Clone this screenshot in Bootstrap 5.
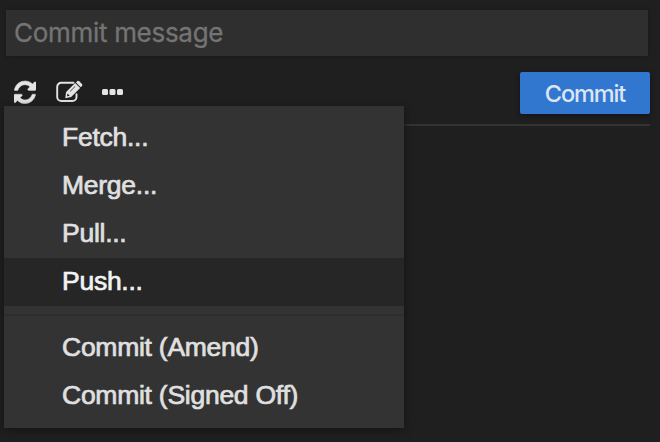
<!DOCTYPE html>
<html lang="en">
<head>
<meta charset="utf-8">
<title>Commit</title>
<link href="https://cdn.jsdelivr.net/npm/bootstrap@5.3.0/dist/css/bootstrap.min.css" rel="stylesheet">
<style>
body{background:#1f1f1f;color:#e0e0e0;height:442px;overflow:hidden;padding:10px 10px 0 6px}
.msg-input,.msg-input:focus{width:642px;height:46px;background:#2f2f2f;color:#ddd;font:26px/46px Inter,sans-serif;letter-spacing:-.3px;padding:0 8px;box-shadow:0 0 3px #191919}
.msg-input::placeholder{color:#747474;opacity:1;-webkit-text-stroke:.3px}
.tools{height:70px;padding-top:16px;border-bottom:2px solid #333}
.tool-btn{line-height:0;color:#e4e4e4}
.tool-group{gap:19px}
.commit-btn{width:130px;height:42px;background:#3277cf;color:#dbe5f3;border-radius:2px;font:500 23.5px/44px Inter,sans-serif;letter-spacing:-1.1px;box-shadow:0 2px 5px #141414}
.git-menu{left:-2px;top:50px;width:400px;height:322px;background:#333;font:26.5px/48px "Liberation Sans",Arial,sans-serif;box-shadow:0 2px 8px #151515}
.git-menu .dropdown-item{height:48px;padding:0 0 0 58px;color:#e0e0e0;line-height:46px;letter-spacing:-.26px;-webkit-text-stroke:.7px}
.git-menu .dropdown-item:hover,.git-menu .dropdown-item.active{background:#262626;color:#f2f2f2}
.git-menu .dropdown-divider{border-top:2px solid #2e2e2e;margin:8px 0;opacity:1}
</style>
<script src="https://cdn.jsdelivr.net/npm/bootstrap@5.3.0/dist/js/bootstrap.bundle.min.js"></script>
</head>
<body>
<input class="msg-input form-control border-0 rounded-0" type="text" placeholder="Commit message" aria-label="Commit message">
<div class="tools position-relative d-flex justify-content-between align-items-start">
  <div class="tool-group d-flex ps-2 pt-2">
    <button class="tool-btn btn border-0 p-0" aria-label="Refresh"><svg width="22" height="24" viewBox="0 -60 1536 1616" preserveAspectRatio="none" fill="currentColor" stroke="currentColor" stroke-width="30"><path d="M1511 928q0 5-1 7-64 268-268 434.500t-478 166.500q-146 0-282.500-55t-243.500-157l-129 129q-19 19-45 19t-45-19-19-45v-448q0-26 19-45t45-19h448q26 0 45 19t19 45-19 45l-137 137q71 66 161 102t187 36q134 0 250-65t186-179q11-17 53-117 8-23 30-23h192q13 0 22.500 9.500t9.500 22.500zm25-800v448q0 26-19 45t-45 19h-448q-26 0-45-19t-19-45 19-45l138-138q-148-137-349-137-134 0-250 65t-186 179q-11 17-53 117-8 23-30 23h-199q-13 0-22.500-9.500t-9.500-22.500v-7q65-268 270-434.500t480-166.500q146 0 284 55.500t245 156.500l130-129q19-19 45-19t45 19 19 45z"/></svg></button>
    <button class="tool-btn btn border-0 p-0" aria-label="Edit"><svg width="28" height="24" viewBox="0 0 28 24"><path d="M18.500 2.800H6.200a4 4 0 0 0-4 4V17a4 4 0 0 0 4 4h11.300a4 4 0 0 0 4-4v-2.800" fill="none" stroke="currentColor" stroke-width="1.900" stroke-linecap="round"/><path d="M10.300 18.200l.8-6.300 9-8.800 5 4.900-9 9z" fill="currentColor"/><path d="M21 2.400l1.300-1.300q.9-.7 1.800.1l2.900 2.900q.8.900 0 1.800l-1.300 1.300z" fill="currentColor"/><path d="M15 11.500l5.200-5.100" stroke="#1f1f1f" stroke-width=".8"/><path d="M12.600 13.600l2 2.100-2.200.6-.4-.4z" fill="#1f1f1f"/></svg></button>
    <button class="tool-btn btn border-0 p-0" aria-label="More actions"><svg width="22" height="24" viewBox="0 0 22 24" fill="currentColor"><rect x="0" y="9" width="6" height="6" rx="1.500"/><rect x="7.500" y="9" width="6" height="6" rx="1.500"/><rect x="15" y="9" width="6" height="6" rx="1.500"/></svg></button>
  </div>
  <button class="commit-btn btn border-0 p-0">Commit</button>
  <div class="git-menu dropdown-menu show d-block border-0 rounded-0 py-2">
    <a class="dropdown-item">Fetch...</a>
    <a class="dropdown-item">Merge...</a>
    <a class="dropdown-item">Pull...</a>
    <a class="dropdown-item active">Push...</a>
    <hr class="dropdown-divider">
    <a class="dropdown-item">Commit (Amend)</a>
    <a class="dropdown-item">Commit (Signed Off)</a>
  </div>
</div>
</body>
</html>
